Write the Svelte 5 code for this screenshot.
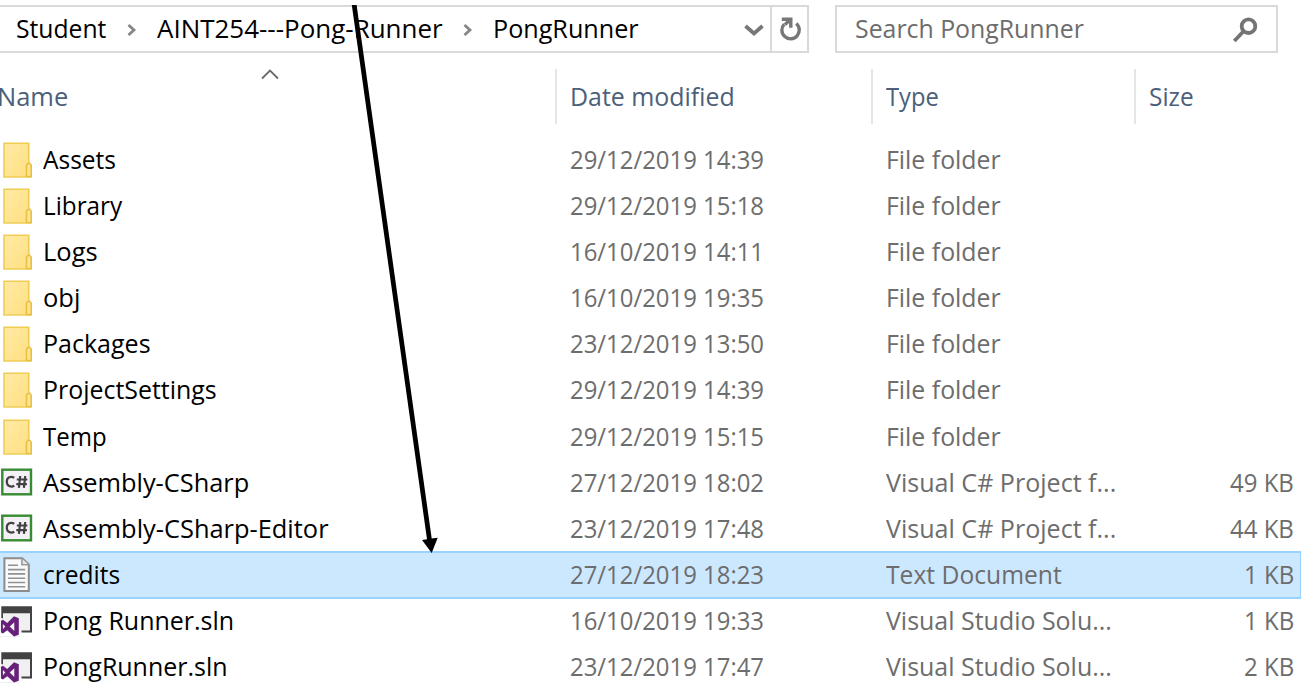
<script>
  // Squeezes a label horizontally so that it fills the given width.
  function fit(node, width) {
    node.style.transform = `scaleX(${width / node.offsetWidth})`;
  }

  const folder = 'File folder';
  const csharp = 'Visual C# Project f...';
  const solution = 'Visual Studio Solu...';
  const typeWidths = { [folder]: 115, [csharp]: 230, [solution]: 226, 'Text Document': 176 };

  const files = [
    { icon: 'folder', name: 'Assets', w: 73, date: '29/12/2019 14:39', type: folder },
    { icon: 'folder', name: 'Library', w: 79, date: '29/12/2019 15:18', type: folder },
    { icon: 'folder', name: 'Logs', w: 55, date: '16/10/2019 14:11', type: folder },
    { icon: 'folder', name: 'obj', w: 37, date: '16/10/2019 19:35', type: folder },
    { icon: 'folder', name: 'Packages', w: 108, date: '23/12/2019 13:50', type: folder },
    { icon: 'folder', name: 'ProjectSettings', w: 174, date: '29/12/2019 14:39', type: folder },
    { icon: 'folder', name: 'Temp', w: 64, date: '29/12/2019 15:15', type: folder },
    { icon: 'csharp', name: 'Assembly-CSharp', w: 206, date: '27/12/2019 18:02', type: csharp, size: '49 KB', sw: 64 },
    { icon: 'csharp', name: 'Assembly-CSharp-Editor', w: 286, date: '23/12/2019 17:48', type: csharp, size: '44 KB', sw: 64 },
    { icon: 'text', name: 'credits', w: 77, date: '27/12/2019 18:23', type: 'Text Document', size: '1 KB', sw: 50, selected: true },
    { icon: 'sln', name: 'Pong Runner.sln', w: 191, date: '16/10/2019 19:33', type: solution, size: '1 KB', sw: 50 },
    { icon: 'sln', name: 'PongRunner.sln', w: 185, date: '23/12/2019 17:47', type: solution, size: '2 KB', sw: 50 }
  ];
</script>

<main>
  <div class="toolbar">
    <nav class="address">
      <span class="crumb first"><span class="fit" use:fit={90}>Student</span></span>
      <svg class="sep" width="12" height="16" viewBox="0 0 12 16"><path d="M2.5 3 8 8l-5.500 5" /></svg>
      <span class="crumb long"><span class="fit" use:fit={286}>AINT254---Pong-Runner</span></span>
      <svg class="sep" width="12" height="16" viewBox="0 0 12 16"><path d="M2.500 3 8 8l-5.500 5" /></svg>
      <span class="crumb"><span class="fit" use:fit={146}>PongRunner</span></span>
      <svg class="drop" width="22" height="16" viewBox="0 0 22 16"><path d="m2.500 3 8.500 7.500L19.500 3" /></svg>
      <span class="refresh">
        <svg width="24" height="26" viewBox="0 0 24 26">
          <path d="M17.200 7.500A8.700 8.700 0 1 1 5.200 8.200" />
          <path d="M2.800 3.200h9v8.600" />
          <path d="m11.500 3.500-5.500 5" />
        </svg>
      </span>
    </nav>
    <div class="search">
      <span class="fit" use:fit={229}>Search PongRunner</span>
      <svg width="28" height="28" viewBox="0 0 28 28">
        <circle cx="17.500" cy="10.200" r="6.800" /><path d="m12.800 15-9.500 10" />
      </svg>
    </div>
  </div>

  <div class="head grid">
    <div class="name">
      <span class="fit" use:fit={71}>Name</span>
      <svg class="sort" width="20" height="12" viewBox="0 0 20 12"><path d="m2 10.500 8-8 8 8" /></svg>
    </div>
    <div class="col"><span class="fit" use:fit={165}>Date modified</span></div>
    <div class="col"><span class="fit" use:fit={53}>Type</span></div>
    <div class="col"><span class="fit" use:fit={45}>Size</span></div>
  </div>

  <div class="list">
    {#each files as f}
      <div class="row grid" class:selected={f.selected}>
        <div class="file">
          <svg class="icon" width="34" height="40" viewBox="0 0 34 40">
            {#if f.icon === 'folder'}
              <defs>
                <linearGradient id="paper" x1="0" y1="0" x2="1" y2="1">
                  <stop offset="0" stop-color="#ffeaa5" /><stop offset="1" stop-color="#ffdf80" />
                </linearGradient>
              </defs>
              <path d="M4 4.200h24.800v20.300l2.200 2V38H4z" fill="url(#paper)" stroke="#efcd55" stroke-width="1.600" />
              <path d="M26.500 37.500V26.200l1.600-2h1.500l1.600 2v11.300z" fill="#ffe493" stroke="#e9c142" stroke-width="1.600" />
            {:else if f.icon === 'csharp'}
              <rect x="2.300" y="7.700" width="28.700" height="24.600" fill="#f3f1f5" stroke="#388a34" stroke-width="2.400" />
              <path d="M14.300 15.700c-3.500-2-7.500-.3-7.500 4s4 6 7.500 4M20.200 14l-1.300 11.800M25.200 14l-1.300 11.800M16.800 17.500h10.600M16.300 22.200h10.600" fill="none" stroke="#424242" stroke-width="2.200" />
            {:else if f.icon === 'text'}
              <path d="M4.400 4.300h17.800l6.600 6.200v26.500H4.400z" fill="#fafafa" stroke="#8c8c8c" stroke-width="2" />
              <path d="M21.900 4.500v6.200h6.800" fill="#e6e6e6" stroke="#999" stroke-width="1.600" />
              <path d="M8 11.300h10M8 15.600h17.200M8 19.900h17.200M8 24.200h17.200M8 28.500h17.200M8 32.800h17.200" stroke="#919191" stroke-width="1.600" />
            {:else}
              <path d="M2 7h29v24.500H2z" fill="#f0eff1" />
              <path d="M1.300 12V6.200H32v7H3v5H1.300z" fill="#424242" />
              <path d="M31 12v19.400H21.500" fill="none" stroke="#424242" stroke-width="2" />
              <path d="M0 20h8l4-3h8v20H0z" fill="#f0eff1" />
              <path d="M0 31.500V36h20v-4z" fill="#fff" />
              <path d="M14 16.200 18.800 18.200V34.800L14 36.600 7.200 30.200 3 33.400 1 32.400V20.800L3 19.800 7.200 23z" fill="#68217a" />
              <path d="M14.300 22.300v8.600L9.700 26.600zM2.900 24v5.300l2.400-2.700z" fill="#f0eff1" />
            {/if}
          </svg>
          <span class="fit" use:fit={f.w}>{f.name}</span>
        </div>
        <div class="col meta"><span class="fit" use:fit={194}>{f.date}</span></div>
        <div class="col meta"><span class="fit" use:fit={typeWidths[f.type]}>{f.type}</span></div>
        <div class="size meta">
          {#if f.size}<span class="fit end" use:fit={f.sw}>{f.size}</span>{/if}
        </div>
      </div>
    {/each}
  </div>

  <svg class="arrow" width="100" height="560" viewBox="0 0 100 560">
    <path d="M11.800 5h4.800l75.100 533.500 6-.8L91.700 553 82 540l5-.8z" />
  </svg>
</main>

<style>
  :global(body) { background: #fff; }
  main {
    position: relative;
    width: 1301px;
    height: 693px;
    overflow: hidden;
    background: #fff;
    color: #000;
    font: 25.5px/36px "Open Sans", "Noto Sans", sans-serif;
  }
  svg { flex: none; }
  .fit {
    display: inline-block;
    white-space: nowrap;
    transform-origin: 0 50%;
  }
  .fit.end { transform-origin: 100% 50%; }

  .toolbar {
    display: flex;
    gap: 26px;
    padding-top: 5px;
  }
  .address, .search {
    box-sizing: border-box;
    display: flex;
    align-items: center;
    height: 48px;
    border: 2px solid #d9d9d9;
  }
  .address { width: 809px; border-left: 0; }
  .address path, .search path, .search circle { fill: none; stroke: #777; stroke-width: 3.4; }
  .address .drop path { stroke-width: 3.8; }
  .crumb, .search > span { padding-bottom: 2px; }
  .crumb { width: 244px; flex: none; }
  .first { width: 110px; padding-left: 16px; }
  .long { width: 306px; margin-left: 19px; }
  .address .sep path { stroke: #858585; stroke-width: 2.8; }
  .long + .sep { margin-left: -1px; margin-right: 19px; }
  .sep { margin-top: 2px; }
  .drop { margin: 4px 5px 0 6px; }
  .refresh {
    display: flex;
    align-items: center;
    height: 44px;
    padding-left: 7px;
    border-left: 2px solid #d9d9d9;
  }
  .search { width: 443px; padding: 0 17px 0 18px; justify-content: space-between; color: #6d6d6d; }
  .search svg { margin-top: 2px; }
  .search path, .search circle { stroke: #747474; stroke-width: 3.8; }

  .grid {
    display: grid;
    grid-template-columns: 555px 316px 263px 167px;
  }
  .head { height: 55px; margin-top: 16px; color: #4c607a; }
  .head .col { padding: 9px 0 0 13px; border-left: 2px solid #e5e5e5; }
  .name { position: relative; padding-top: 9px; }
  .name .fit { margin-left: -3px; }
  .sort { position: absolute; left: 260px; top: -1px; }
  .sort path { fill: none; stroke: #6b6b6b; stroke-width: 1.8; }

  .list { padding-top: 12px; }
  .row { height: 46.08px; align-items: center; }
  .file { display: flex; align-items: center; }
  .icon { margin-right: 9px; }
  .col { padding-left: 15px; }
  .meta { color: #6d6d6d; }
  .size { padding-right: 7px; text-align: right; }
  .selected {
    background: #cce8ff;
    box-shadow: inset 0 2px #99d1ff, inset -1px 0 #99d1ff, 0 2px #99d1ff;
  }
  .arrow { position: absolute; left: 340px; top: 0; }
</style>
